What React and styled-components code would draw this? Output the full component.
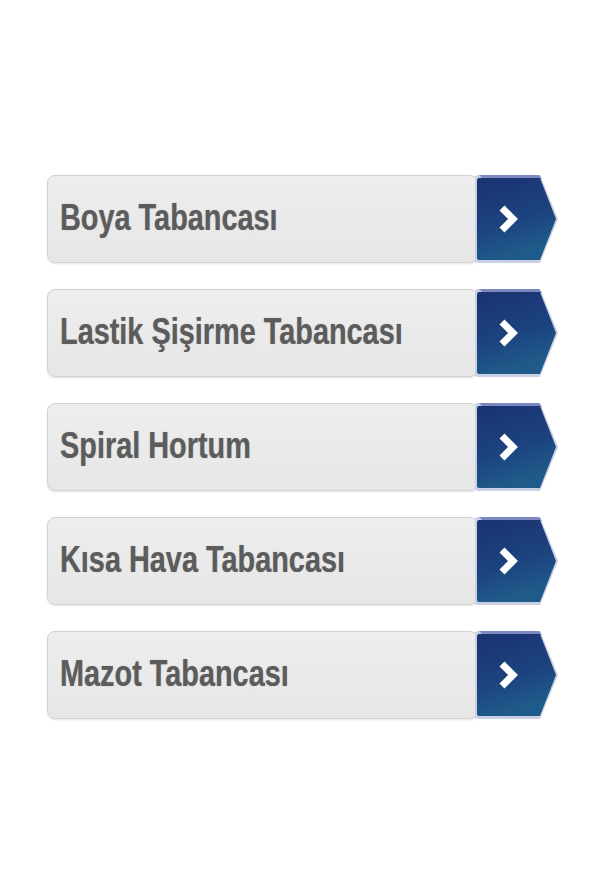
import React from 'react'
import styled, { createGlobalStyle } from 'styled-components';

const items = [
  'Boya Tabancası',
  'Lastik Şişirme Tabancası',
  'Spiral Hortum',
  'Kısa Hava Tabancası',
  'Mazot Tabancası',
];

const GlobalStyle = createGlobalStyle`
  html, body {
    margin: 0;
    padding: 0;
    background: #ffffff;
  }
  body {
    font-family: "Liberation Sans", Arial, sans-serif;
  }
`;

const ArrowTab = () => (
  <TabSvg viewBox="0 0 84 88" width="84" height="88">
    <defs>
      <linearGradient id="tabFill" x1="0" y1="0" x2="0.3" y2="1">
        <stop offset="0" stopColor="#1a3271" />
        <stop offset="0.6" stopColor="#1c437f" />
        <stop offset="1" stopColor="#1f5b8a" />
      </linearGradient>
    </defs>
    <path d="M3 0 H65 L83 44 L65 88 H3 Q0 88 0 85 V3 Q0 0 3 0 Z" fill="#c9cfe4" />
    <path d="M4 0 H64 L67 4 H8 Z" fill="#7d87c0" />
    <path d="M4 3 H65 L81 44 L65 85 H4 Q2 85 2 83 V6 Q2 3 4 3 Z" fill="url(#tabFill)" />
    <polyline
      points="27,33 38,44 27,55"
      fill="none"
      stroke="#ffffff"
      strokeWidth="7"
      strokeLinejoin="miter"
      strokeLinecap="butt"
    />
  </TabSvg>
);

const App = () => {
  return (
    <Page>
      <GlobalStyle />
      <List>
        {items.map((label) => (
          <Row key={label}>
            <Label>
              <LabelText>{label}</LabelText>
            </Label>
            <ArrowTab />
          </Row>
        ))}
      </List>
    </Page>
  );
};

const Page = styled.div`
  width: 592px;
  height: 888px;
  padding-top: 175px;
  box-sizing: border-box;
`;

const List = styled.div`
  display: flex;
  flex-direction: column;
  gap: 26px;
  margin-left: 47px;
  width: 512px;
`;

const Row = styled.div`
  display: flex;
  align-items: stretch;
  height: 88px;
  cursor: pointer;
`;

const Label = styled.div`
  flex: 1;
  display: flex;
  align-items: center;
  padding-left: 12px;
  padding-bottom: 3px;
  box-sizing: border-box;
  overflow: hidden;
  background: linear-gradient(#eeeeee, #e6e6e6);
  border: 1px solid #d2d2d2;
  border-radius: 8px;
  box-shadow: 0 1px 2px rgba(0, 0, 0, 0.12);
`;

/* condensed look: the label is squeezed horizontally */
const LabelText = styled.span`
  display: inline-block;
  transform: scaleX(0.78);
  transform-origin: left center;
  color: #5c5c5c;
  font-size: 37px;
  font-weight: bold;
  text-shadow: 0 0 1px rgba(90, 90, 90, 0.5);
  white-space: nowrap;
`;

const TabSvg = styled.svg`
  flex: none;
  margin-left: -3px;
  display: block;
`;

export default App;
